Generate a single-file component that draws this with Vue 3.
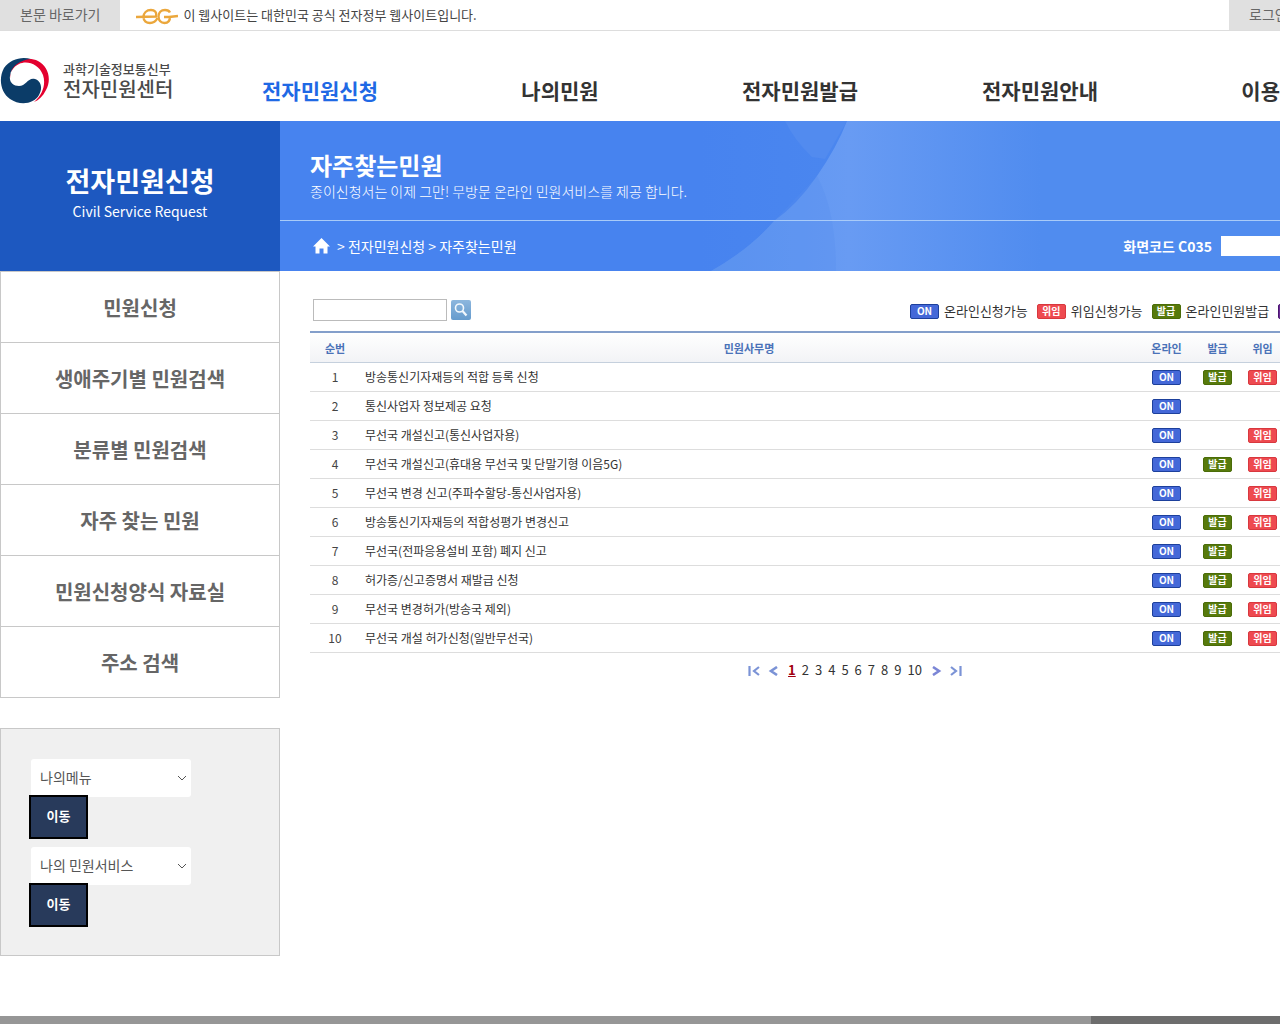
<script setup>
import { ref } from 'vue'

const nav = ['전자민원신청', '나의민원', '전자민원발급', '전자민원안내', '이용안내']
const side = ['민원신청', '생애주기별 민원검색', '분류별 민원검색', '자주 찾는 민원', '민원신청양식 자료실', '주소 검색']
const quick = [
  { id: 'my-menu', label: '나의메뉴' },
  { id: 'my-service', label: '나의 민원서비스' },
]
const rows = [
  { name: '방송통신기자재등의 적합 등록 신청', issue: true, proxy: true },
  { name: '통신사업자 정보제공 요청', issue: false, proxy: false },
  { name: '무선국 개설신고(통신사업자용)', issue: false, proxy: true },
  { name: '무선국 개설신고(휴대용 무선국 및 단말기형 이음5G)', issue: true, proxy: true },
  { name: '무선국 변경 신고(주파수할당-통신사업자용)', issue: false, proxy: true },
  { name: '방송통신기자재등의 적합성평가 변경신고', issue: true, proxy: true },
  { name: '무선국(전파응용설비 포함) 폐지 신고', issue: true, proxy: false },
  { name: '허가증/신고증명서 재발급 신청', issue: true, proxy: true },
  { name: '무선국 변경허가(방송국 제외)', issue: true, proxy: true },
  { name: '무선국 개설 허가신청(일반무선국)', issue: true, proxy: true },
]
const page = ref(1)
const keyword = ref('')
const code = ref('')
</script>

<template>
  <div class="viewport">
    <div class="page">
      <div class="topbar">
        <a class="skip" href="#content">본문 바로가기</a>
        <p class="official">
          <svg width="42" height="18" viewBox="0 0 42 18" fill="none" stroke="#eba73c" stroke-width="2.4" aria-hidden="true">
            <path d="M0 10L20 9.500C21 5 18.500 3 15 3C10.500 3 7.500 6 7.500 10C7.500 14 10.500 16 14 16C18 16 20 14 21.500 11" />
            <path d="M34 5.500C33 3.500 31 3 29 3C25 3 22.500 6 22.500 9.500C22.500 13.500 25 16 28.500 16C32 16 34 14 34 10H28M33 10L42 9" />
          </svg>
          <span>이 웹사이트는 대한민국 공식 전자정부 웹사이트입니다.</span>
        </p>
        <div class="account"><a href="#login">로그인</a></div>
      </div>

      <header class="header">
        <a class="logo" href="#home">
          <svg width="50" height="48" viewBox="0 0 50 48" aria-hidden="true">
            <path fill="#e4002f" d="M12 10C18 2 30 0 38 4C48 9 52 22 46 33C43 39 39 43 34 45C43 37 46 27 43 18C39 7 27 3 19 7C13 10 10 15 10 21Z" />
            <path fill="#0b3c68" d="M31 2C22-1 10 2 4 11C-2 22 1 36 10 42C20 49 34 47 39 38C43 31 41 24 35 22C28 20 26 29 19 29C13 29 9 25 10 19C11 9 20 3 31 2Z" />
          </svg>
          <span class="logo-text">
            <span class="ministry">과학기술정보통신부</span>
            <span class="center">전자민원센터</span>
          </span>
        </a>
        <nav class="nav">
          <a v-for="(item, i) in nav" :key="item" href="#" :class="{ on: i === 0 }">{{ item }}</a>
        </nav>
      </header>

      <div class="body">
        <aside class="side">
          <div class="side-title">
            <h2>전자민원신청</h2>
            <p>Civil Service Request</p>
          </div>
          <ul class="menu">
            <li v-for="item in side" :key="item"><a href="#">{{ item }}</a></li>
          </ul>
          <div class="quick">
            <form v-for="q in quick" :key="q.id" @submit.prevent>
              <div class="pick">
                <select :id="q.id" :aria-label="q.label"><option>{{ q.label }}</option></select>
                <svg width="10" height="6" viewBox="0 0 10 6" fill="none" stroke="#555" aria-hidden="true"><path d="M1 1L5 5L9 1" /></svg>
              </div>
              <button type="submit">이동</button>
            </form>
          </div>
        </aside>

        <main id="content" class="main">
          <div class="banner">
            <svg class="art" width="1120" height="150" viewBox="0 0 1120 150" aria-hidden="true">
              <defs>
                <linearGradient id="glow" x1="431" y1="0" x2="760" y2="0" gradientUnits="userSpaceOnUse">
                  <stop offset="0" stop-color="#5c94f0" />
                  <stop offset="0.42" stop-color="#689bf3" />
                  <stop offset="1" stop-color="#508cef" />
                </linearGradient>
              </defs>
              <path fill="#528bef" d="M505 0Q515 20 532 36L545 38L567 0Z" />
              <path fill="url(#glow)" d="M567 0Q557 26 537 55T494 100Q470 128 431 150H1120V0Z" />
              <path fill="#568ff0" fill-opacity=".3" d="M537 55Q556 90 556 150H431Q470 128 494 100Z" />
            </svg>
            <div class="banner-head">
              <h1>자주찾는민원</h1>
              <p>종이신청서는 이제 그만! 무방문 온라인 민원서비스를 제공 합니다.</p>
            </div>
            <div class="crumbs">
              <a href="#home" aria-label="홈">
                <svg width="17" height="16" viewBox="0 0 17 16" fill="#fff" aria-hidden="true"><path d="M8.500 0L17 8.500H14.500V15.500H10.500V10.500H6.500V15.500H2.500V8.500H0Z" /></svg>
              </a>
              <span>&gt; 전자민원신청 &gt; 자주찾는민원</span>
              <label class="code"><b>화면코드 C035</b><input v-model="code" type="text"></label>
            </div>
          </div>

          <div class="tools">
            <form class="search" @submit.prevent>
              <input v-model="keyword" type="text" aria-label="검색어">
              <button type="submit" aria-label="검색">
                <svg width="20" height="20" viewBox="0 0 20 20" fill="none" stroke="#f2f8fd" aria-hidden="true">
                  <circle cx="8.500" cy="8" r="4" stroke-width="1.600" />
                  <path d="M11.500 11L15.500 15.500" stroke-width="2.200" />
                </svg>
              </button>
            </form>
            <ul class="legend">
              <li><span class="badge online">ON</span>온라인신청가능</li>
              <li><span class="badge proxy">위임</span>위임신청가능</li>
              <li><span class="badge issue">발급</span>온라인민원발급</li>
              <li><span class="badge extra"></span></li>
            </ul>
          </div>

          <table class="list">
            <colgroup>
              <col class="c-no"><col><col class="c-on"><col class="c-flag"><col class="c-flag"><col class="c-rest">
            </colgroup>
            <thead>
              <tr><th>순번</th><th>민원사무명</th><th>온라인</th><th>발급</th><th>위임</th><td></td></tr>
            </thead>
            <tbody>
              <tr v-for="(r, i) in rows" :key="r.name">
                <td>{{ i + 1 }}</td>
                <td class="name"><a href="#">{{ r.name }}</a></td>
                <td><span class="badge online">ON</span></td>
                <td><span v-if="r.issue" class="badge issue">발급</span></td>
                <td><span v-if="r.proxy" class="badge proxy">위임</span></td>
                <td></td>
              </tr>
            </tbody>
          </table>

          <nav class="pager" aria-label="페이지">
            <a class="arrow" href="#" aria-label="처음"><svg width="12" height="10" viewBox="0 0 12 10" fill="none" stroke="#7b93d6" stroke-width="2.200"><path d="M1.500 0V10M11 1L6 5L11 9" /></svg></a>
            <a class="arrow" href="#" aria-label="이전"><svg width="12" height="10" viewBox="0 0 12 10" fill="none" stroke="#7b93d6" stroke-width="2.600"><path d="M10 1L4 5L10 9" /></svg></a>
            <span class="numbers">
              <a v-for="n in 10" :key="n" href="#" :class="{ on: n === page }" @click.prevent="page = n">{{ n }}</a>
            </span>
            <a class="arrow" href="#" aria-label="다음"><svg width="12" height="10" viewBox="0 0 12 10" fill="none" stroke="#7b86d6" stroke-width="2.600"><path d="M2 1L8 5L2 9" /></svg></a>
            <a class="arrow" href="#" aria-label="마지막"><svg width="12" height="10" viewBox="0 0 12 10" fill="none" stroke="#7b93d6" stroke-width="2.200"><path d="M10.500 0V10M1 1L6 5L1 9" /></svg></a>
          </nav>
        </main>
      </div>
    </div>
    <div class="scroll"><div class="thumb"></div></div>
  </div>
</template>

<style>
body {
  background: #fff;
}
</style>

<style scoped>
.viewport {
  display: flex;
  flex-direction: column;
  min-height: 100vh;
  overflow: hidden;
  font: 14px/20px "Noto Sans CJK KR", "Noto Sans", sans-serif;
  color: #444;
}
.viewport * {
  box-sizing: border-box;
}
.page {
  flex: 1;
  min-width: 1400px;
}
a {
  color: inherit;
  text-decoration: none;
}
h1, h2, p, ul {
  margin: 0;
  padding: 0;
  list-style: none;
}
input, select, button {
  font: inherit;
  margin: 0;
}
svg {
  display: block;
  flex: none;
}

.topbar {
  display: flex;
  border-bottom: 1px solid #ddd;
  line-height: 28px;
  color: #666;
}
.skip {
  padding: 0 20px 2px;
  background: #e0e0e0;
}
.official {
  display: flex;
  align-items: center;
  gap: 5px;
  padding-left: 16px;
  font-size: 13px;
  color: #444;
}
.official svg {
  margin-top: 2px;
}
.account {
  width: 171px;
  margin-left: auto;
  padding-left: 20px;
  background: #e0e0e0;
}

.header {
  display: flex;
  height: 90px;
}
.logo {
  display: flex;
  gap: 13px;
  width: 200px;
  padding-top: 26px;
}
.logo-text {
  display: flex;
  flex-direction: column;
  padding-top: 2px;
  font-weight: 500;
  color: #4a4a4a;
}
.ministry {
  font-size: 13px;
  line-height: 20px;
}
.center {
  font-size: 20px;
  line-height: 20px;
}
.nav {
  display: flex;
}
.nav a {
  width: 240px;
  padding-top: 44px;
  font-size: 21px;
  line-height: 30px;
  font-weight: 700;
  text-align: center;
  color: #333;
}
.nav a.on {
  color: #1f69e5;
}

.body {
  display: flex;
}
.side {
  flex: none;
  width: 280px;
}
.side-title {
  height: 150px;
  padding-top: 40px;
  text-align: center;
  color: #fff;
  background: #1d58c0;
}
.side-title h2 {
  font-size: 27px;
  line-height: 40px;
}
.menu {
  border: 1px solid #c8c8c8;
  border-bottom: 0;
}
.menu a {
  display: block;
  padding-top: 2px;
  border-bottom: 1px solid #c8c8c8;
  font-size: 20px;
  line-height: 68px;
  font-weight: 700;
  text-align: center;
  color: #666;
}
.quick {
  display: flex;
  flex-direction: column;
  gap: 10px;
  margin: 30px 0 60px;
  padding: 30px;
  border: 1px solid #c8c8c8;
  background: #f0f0f0;
}
.pick {
  position: relative;
  width: 160px;
}
.pick select {
  display: block;
  width: 100%;
  height: 38px;
  padding: 0 9px 2px;
  border: 0;
  border-radius: 3px;
  appearance: none;
  color: #555;
  background: #fff;
}
.pick svg {
  position: absolute;
  top: 16px;
  right: 4px;
}
.quick button {
  display: block;
  position: relative;
  width: 55px;
  height: 40px;
  padding: 0 0 2px;
  border: 0;
  outline: 2px solid #000;
  font-size: 13px;
  font-weight: 700;
  color: #fff;
  background: #283a5b;
}

.main {
  flex: 1;
  min-width: 0;
}
.banner {
  position: relative;
  height: 150px;
  overflow: hidden;
  color: #fff;
  background: linear-gradient(90deg, #4783ef 420px, #508cef 800px);
}
.art {
  position: absolute;
  top: 0;
  left: 0;
}
.banner-head {
  position: relative;
  height: 100px;
  padding: 28px 30px 0;
  border-bottom: 1px solid #a9cbf8;
}
.banner-head h1 {
  font-size: 24px;
  line-height: 32px;
}
.banner-head p {
  font-weight: 300;
}
.crumbs {
  position: relative;
  display: flex;
  align-items: center;
  gap: 7px;
  height: 50px;
  padding-left: 33px;
}
.code {
  display: flex;
  gap: 9px;
  margin-left: auto;
}
.code input {
  width: 179px;
  height: 20px;
  padding: 0 4px;
  border: 0;
  background: #fff;
}

.tools {
  display: flex;
  justify-content: space-between;
  height: 60px;
  padding: 28px 0 0 33px;
}
.search {
  display: flex;
  align-items: center;
  gap: 4px;
  height: 22px;
}
.search input {
  width: 134px;
  height: 22px;
  padding: 0 4px;
  border: 1px solid #bbb;
  background: #fff;
}
.search button {
  width: 20px;
  height: 20px;
  padding: 0;
  border: 0;
  border-radius: 2px;
  background: linear-gradient(#8db7de, #659bcd);
}
.legend {
  display: flex;
  gap: 9px;
  width: 490px;
  padding-top: 2px;
  font-size: 13px;
  color: #333;
}
.legend li {
  display: flex;
  align-items: center;
  gap: 5px;
  height: 20px;
}
.badge {
  display: block;
  width: 29px;
  height: 15px;
  margin: 0 auto;
  border: 1px solid;
  border-radius: 2px;
  font-size: 10px;
  line-height: 12px;
  font-weight: 700;
  text-align: center;
  color: #fff;
}
.online {
  border-color: #1d409c;
  background: #4468d8;
}
.proxy {
  border-color: #d8383e;
  background: #ee4a50;
}
.issue {
  border-color: #4a6c08;
  background: #577a0c;
}
.extra {
  border-color: #4b1670;
  background: #6b2a96;
}

.list {
  width: calc(100% - 30px);
  margin-left: 30px;
  border-top: 2px solid #849fcb;
  border-spacing: 0;
  table-layout: fixed;
  font-size: 12px;
  text-align: center;
}
.c-no {
  width: 50px;
}
.c-on {
  width: 57px;
}
.c-flag {
  width: 45px;
}
.c-rest {
  width: 115px;
}
.list th, .list td {
  height: 29px;
  padding: 0;
  border-bottom: 1px solid #ddd;
  line-height: 20px;
}
.list thead th, .list thead td {
  height: 30px;
  border-color: #c5d0dd;
  font-size: 11px;
  color: #4a72b8;
  background: linear-gradient(#fff, #f2f3f6);
}
.list .name {
  padding-left: 5px;
  text-align: left;
  color: #333;
}

.pager {
  display: flex;
  justify-content: center;
  align-items: center;
  gap: 7px;
  height: 34px;
  padding-left: 30px;
  font-size: 13px;
  color: #333;
}
.arrow {
  padding-top: 2px;
}
.numbers {
  display: flex;
  gap: 6px;
  padding: 0 2px;
}
.numbers .on {
  font-weight: 700;
  text-decoration: underline;
  color: #a00010;
}

.scroll {
  height: 8px;
  background: #6d6d6d;
}
.thumb {
  width: 85.25%;
  height: 100%;
  background: #969696;
}
</style>
